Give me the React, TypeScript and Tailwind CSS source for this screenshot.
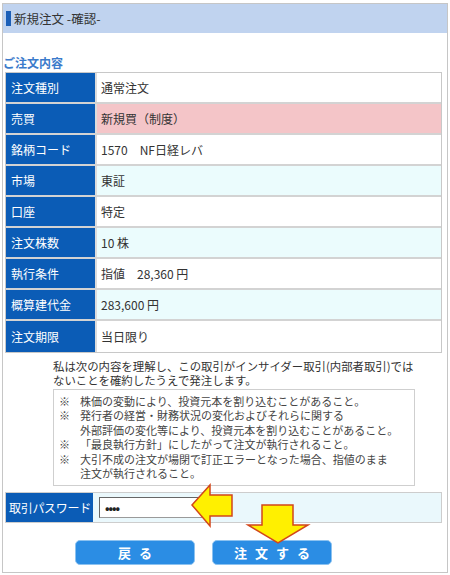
import React from "react";

const rows = [
  { label: "注文種別", value: "通常注文", bg: "bg-white" },
  { label: "売買", value: "新規買（制度）", bg: "bg-[#f4c5c8]" },
  { label: "銘柄コード", value: "1570　NF日経レバ", bg: "bg-white" },
  { label: "市場", value: "東証", bg: "bg-[#ebfcfd]" },
  { label: "口座", value: "特定", bg: "bg-white" },
  { label: "注文株数", value: "10 株", bg: "bg-[#ebfcfd]" },
  { label: "執行条件", value: "指値　28,360 円", bg: "bg-white" },
  { label: "概算建代金", value: "283,600 円", bg: "bg-[#ebfcfd]" },
  { label: "注文期限", value: "当日限り", bg: "bg-white" },
];

const notes = [
  ["株価の変動により、投資元本を割り込むことがあること。"],
  ["発行者の経営・財務状況の変化およびそれらに関する", "外部評価の変化等により、投資元本を割り込むことがあること。"],
  ["「最良執行方針」にしたがって注文が執行されること。"],
  ["大引不成の注文が場閉で訂正エラーとなった場合、指値のまま", "注文が執行されること。"],
];

const App = () => {
  return (
    <div className="relative w-[450px] h-[575px] bg-white font-[family-name:'Noto_Sans_CJK_JP','Noto_Sans',sans-serif] text-[#333]">
      <div className="absolute left-[2px] top-[3px] w-[446px] h-[570px] border border-[#c6c6c6]">
        {/* header */}
        <div className="flex items-center h-[29px] bg-[#c0d3ef]">
          <div className="ml-[3px] w-[5px] h-[15px] bg-[#1c5fb7]" />
          <span className="ml-[3px] text-[12.5px] leading-[14px] text-[#333]">新規注文 -確認-</span>
        </div>

        <div className="mt-[23px] text-[12px] leading-[14px] font-bold text-[#3b7bcb]">ご注文内容</div>

        {/* order table */}
        <div className="mt-[2px] ml-[2px] w-[437px] border border-[#c8c8c8]">
          {rows.map((row, i) => (
            <div
              key={row.label}
              className={`flex h-[31px] ${i < rows.length - 1 ? "border-b-2 border-[#d3d3d3]" : ""}`}
            >
              <div className="w-[89px] bg-[#0b5cb6] text-white text-[12px] flex items-center pl-[5px]">
                {row.label}
              </div>
              <div className={`flex-1 ${row.bg} border-l-2 border-[#dcdcdc] flex items-center pl-[4px] text-[12px]`}>
                {row.value}
              </div>
            </div>
          ))}
        </div>

        {/* disclaimer */}
        <div className="ml-[50px] mt-[6px] text-[11.4px] leading-[14px] whitespace-nowrap">
          <div>私は次の内容を理解し、この取引がインサイダー取引(内部者取引)では</div>
          <div>ないことを確約したうえで発注します。</div>
        </div>
        <div className="ml-[50px] mt-[2px] w-[362px] h-[97px] border border-[#cfcfcf] pt-[4px] text-[11px] leading-[14.4px] text-[#444] whitespace-nowrap">
          {notes.map((lines, i) => (
            <div key={i} className="flex">
              <span className="w-[26px] pl-[5px]">※</span>
              <div>
                {lines.map((l) => (
                  <div key={l}>{l}</div>
                ))}
              </div>
            </div>
          ))}
        </div>

        {/* password */}
        <div className="mt-[6px] ml-[2px] w-[437px] h-[31px] flex bg-[#eaf8fc] border border-[#cdcdcd]">
          <div className="w-[87px] bg-[#0b5cb6] text-white text-[12px] flex items-center pl-[3px] tracking-[-0.3px]">
            取引パスワード
          </div>
          <div className="flex items-center pl-[6px]">
            <div className="w-[110px] h-[21px] bg-white border border-[#9a9a9a] border-t-[#666] border-l-[#666] flex items-center pl-[5px] text-[12px] font-bold leading-none tracking-[-1px] text-[#222]">
              ••••
            </div>
          </div>
        </div>

        {/* buttons */}
        <div className="mt-[17px] flex gap-[17px] pl-[72px]">
          <button className="w-[120px] h-[25px] rounded-[5px] bg-[#2b8de4] border border-[#8cc2f0] text-white text-[13px] font-bold tracking-[8px] pl-[8px]">
            戻る
          </button>
          <button className="w-[120px] h-[25px] rounded-[5px] bg-[#2b8de4] border border-[#8cc2f0] text-white text-[13px] font-bold tracking-[8px] pl-[8px]">
            注文する
          </button>
        </div>
      </div>

      {/* arrows */}
      <svg className="absolute left-0 top-0 pointer-events-none" width="450" height="575">
        <polygon
          points="192,505 210,485 210,495 232,495 232,516 210,516 210,526"
          fill="#fff000"
          stroke="#d2461a"
          strokeWidth="1.5"
        />
        <polygon
          points="262,505 293,505 293,525 308,525 278,543 248,525 262,525"
          fill="#fff000"
          stroke="#d2461a"
          strokeWidth="1.5"
        />
      </svg>
    </div>
  );
};

export default App;
